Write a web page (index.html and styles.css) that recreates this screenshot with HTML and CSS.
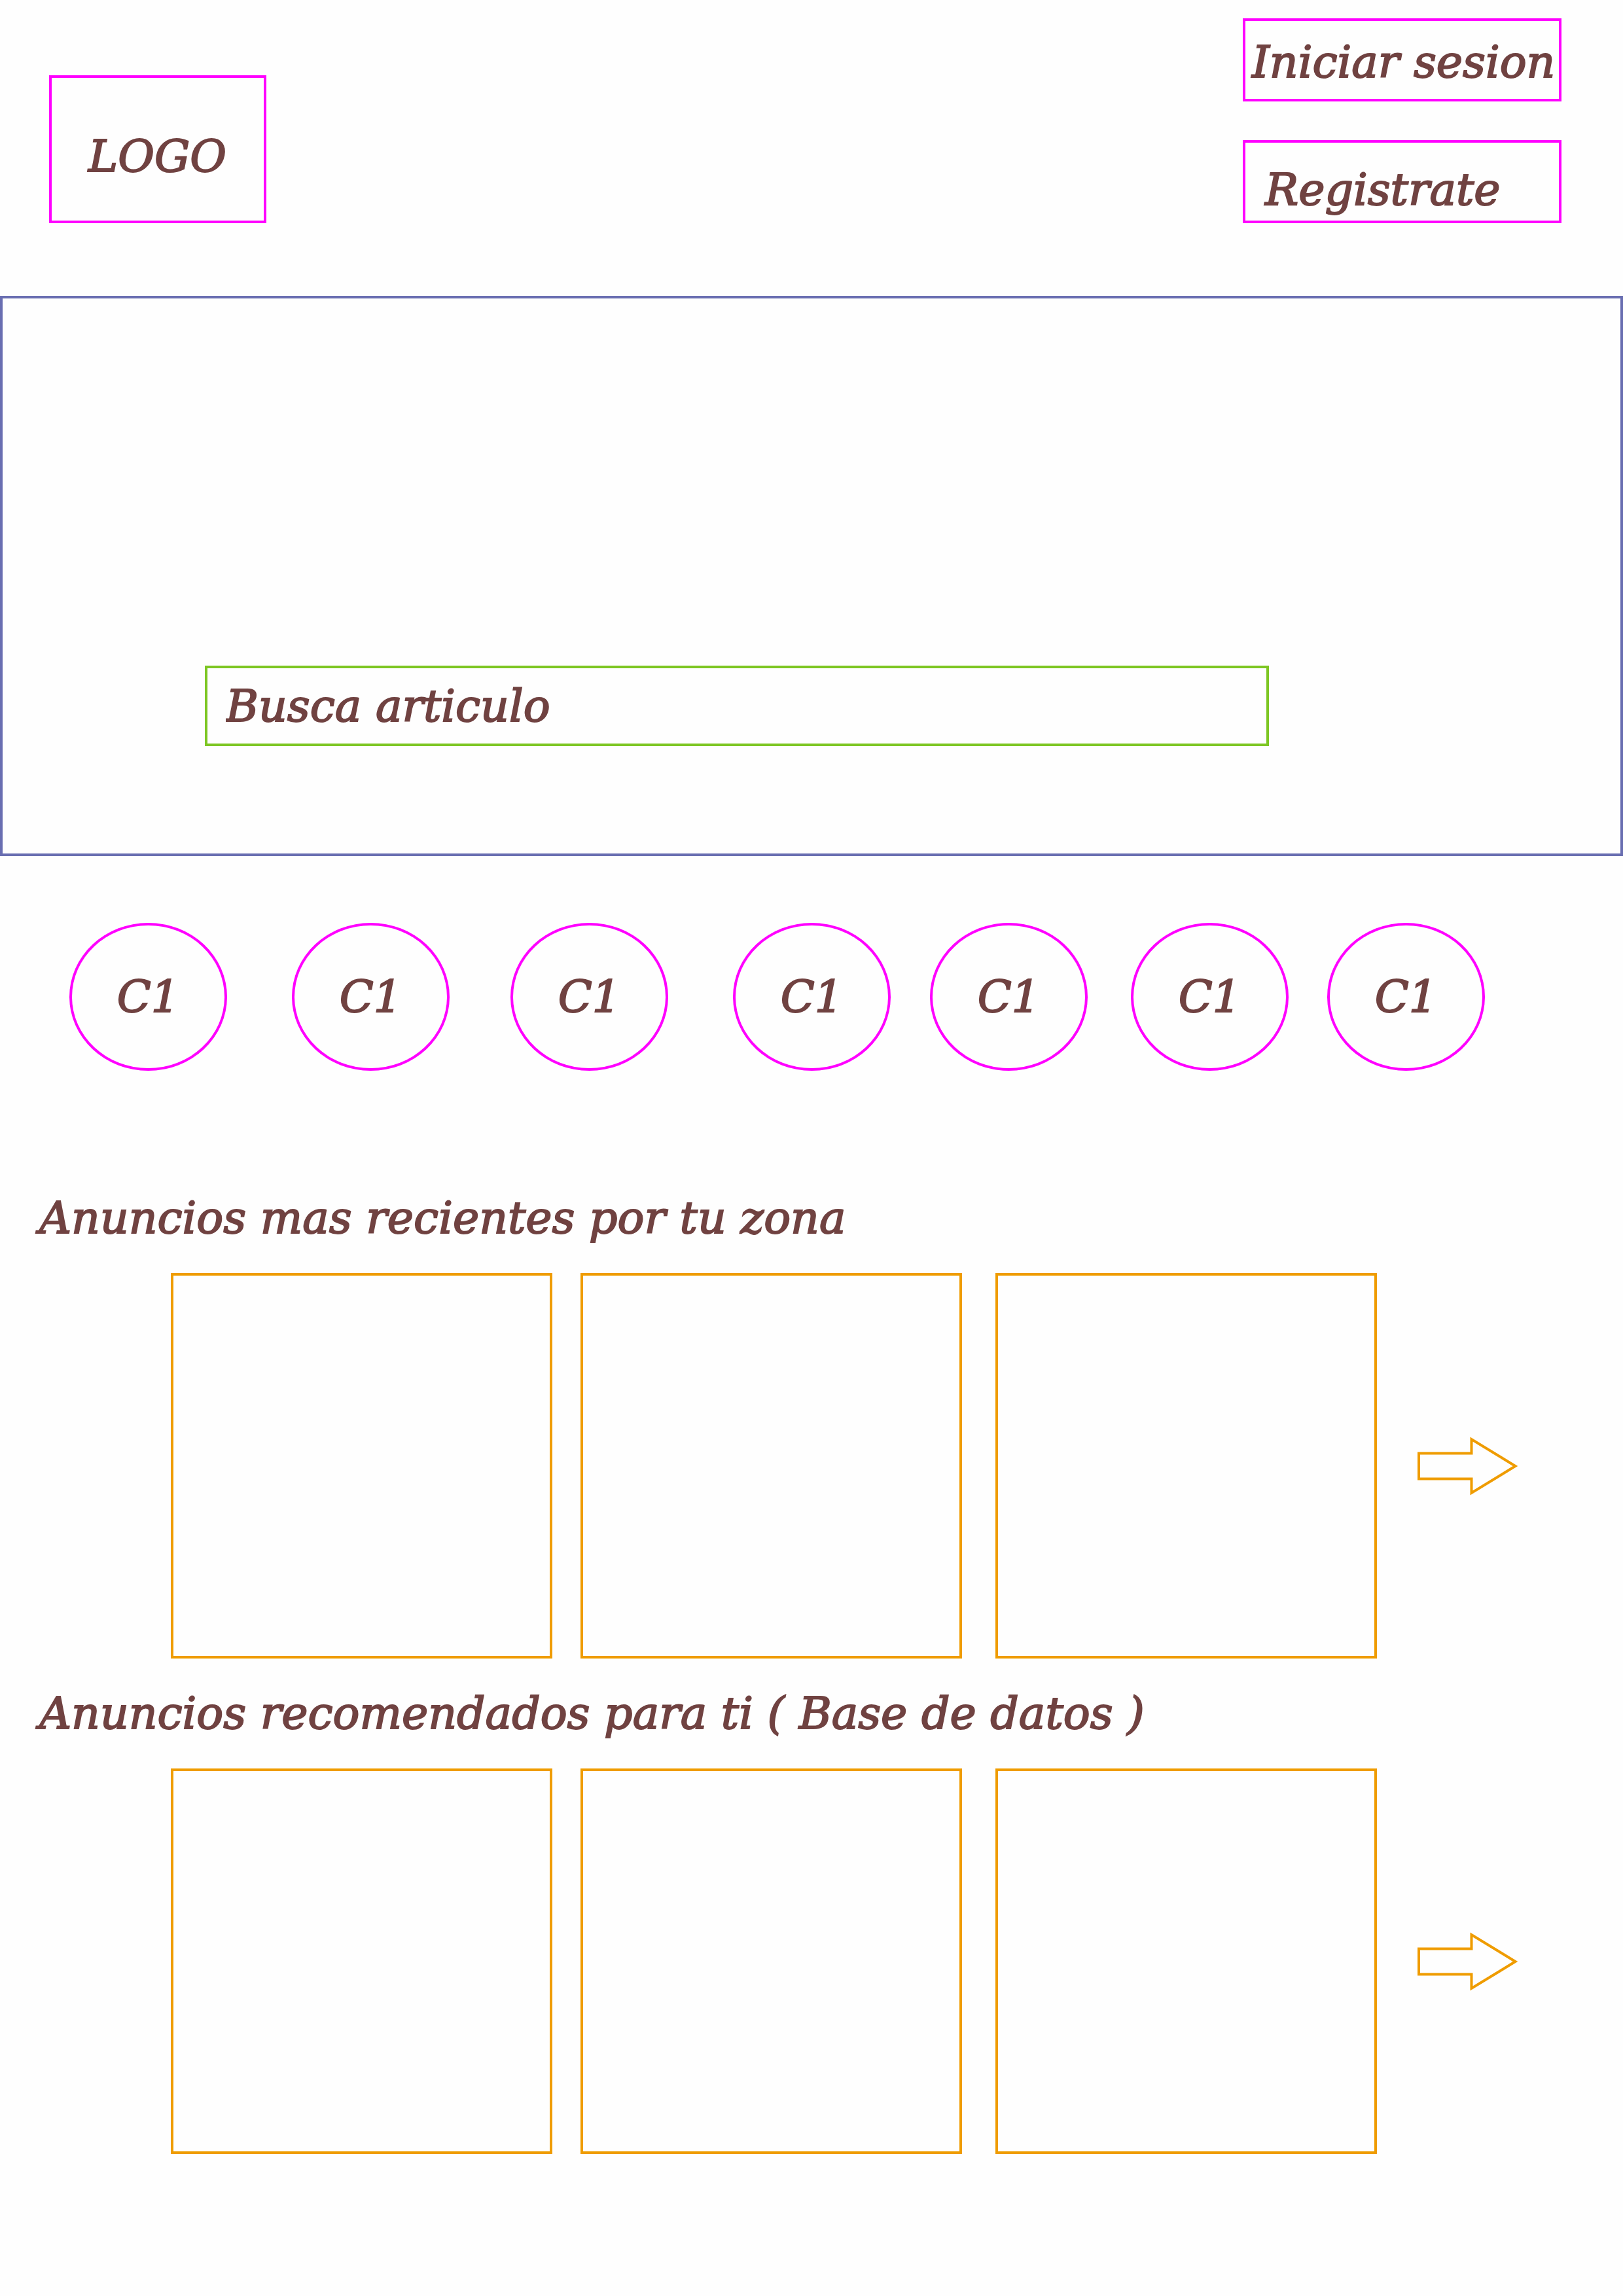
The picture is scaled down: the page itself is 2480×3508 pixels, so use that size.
FILE: index.html
```html
<!DOCTYPE html>
<html lang="es">
<head>
  <meta charset="utf-8">
  <meta name="viewport" content="width=device-width, initial-scale=1">
  <title>Anuncios</title>
  <link rel="stylesheet" href="styles.css">
</head>
<body>
  <header class="header">
    <a class="logo" href="#">LOGO</a>
    <nav class="account">
      <button class="account-button" type="button">Iniciar sesion</button>
      <button class="account-button account-button--register" type="button">Registrate</button>
    </nav>
  </header>

  <main>
    <form class="hero" role="search">
      <input class="search" type="search" aria-label="Busca articulo" placeholder="Busca articulo">
    </form>

    <nav class="categories" aria-label="Categorias">
      <a class="category" href="#">C1</a>
      <a class="category" href="#">C1</a>
      <a class="category" href="#">C1</a>
      <a class="category" href="#">C1</a>
      <a class="category" href="#">C1</a>
      <a class="category" href="#">C1</a>
      <a class="category" href="#">C1</a>
    </nav>

    <section class="listing">
      <h2 class="listing-title">Anuncios mas recientes por tu zona</h2>
      <div class="cards">
        <article class="card"></article>
        <article class="card"></article>
        <article class="card"></article>
        <button class="next" type="button" aria-label="Siguiente">
          <svg class="arrow" viewBox="0 0 154 90" aria-hidden="true"><path d="M2 25.500H82.500V4L149.500 45L82.500 86V64.500H2Z"/></svg>
        </button>
      </div>
    </section>

    <section class="listing">
      <h2 class="listing-title">Anuncios recomendados para ti ( Base de datos )</h2>
      <div class="cards">
        <article class="card"></article>
        <article class="card"></article>
        <article class="card"></article>
        <button class="next" type="button" aria-label="Siguiente">
          <svg class="arrow" viewBox="0 0 154 90" aria-hidden="true"><path d="M2 25.500H82.500V4L149.500 45L82.500 86V64.500H2Z"/></svg>
        </button>
      </div>
    </section>
  </main>
</body>
</html>
```
FILE: styles.css
```css
:root {
  --ink: #704241;
  --pink: #ff00ff;
  --blue: #696eb1;
  --green: #7dc623;
  --orange: #ef9c00;
  --line: 4px;
}

* {
  box-sizing: border-box;
}

body {
  margin: 0;
  background: #fefefe;
  color: var(--ink);
  font: italic 68px/76px "DejaVu Serif", serif;
  -webkit-text-stroke: 2px var(--ink);
}

a {
  color: inherit;
  text-decoration: none;
}

button,
input {
  margin: 0;
  padding: 0;
  border: 0;
  border-radius: 0;
  background: none;
  color: inherit;
  font: inherit;
  -webkit-text-stroke: inherit;
}

/* Header */
.header {
  display: flex;
  justify-content: space-between;
  align-items: flex-end;
  padding: 28px 94px 111px 75px;
}

.logo {
  width: 332px;
  padding: 82px 0 60px 56px;
  border: var(--line) solid var(--pink);
}

.account {
  display: flex;
  flex-direction: column;
  gap: 59px;
  width: 487px;
}

.account-button {
  padding: 25px 0 18px 10px;
  border: var(--line) solid var(--pink);
  text-align: left;
  white-space: nowrap;
}

.account-button--register {
  padding: 34px 0 9px 30px;
}

/* Search banner */
.hero {
  padding: 561px 537px 164px 309px;
  border: var(--line) solid var(--blue);
}

.search {
  display: block;
  width: 100%;
  height: 123px;
  padding: 0 28px;
  border: var(--line) solid var(--green);
  appearance: none;
  outline: none;
}

.search::placeholder {
  color: var(--ink);
  opacity: 1;
}

/* Categories */
.categories {
  display: grid;
  grid-template-columns: 340fr 334fr 340fr 301fr 307fr 300fr 452fr;
  padding: 102px 0 0 106px;
}

.category {
  display: flex;
  justify-content: center;
  align-items: center;
  width: 241px;
  height: 226px;
  border: var(--line) solid var(--pink);
  border-radius: 50%;
}

/* Listings */
.listing {
  padding-top: 46px;
}

.categories + .listing {
  padding-top: 187px;
}

.listing-title {
  margin: 0;
  padding: 0 60px;
  font-size: inherit;
  font-weight: inherit;
}

.cards {
  display: grid;
  grid-template-columns: 583fr 43fr 583fr 51fr 583fr 62fr 154px 160fr;
  align-items: center;
  padding: 46px 0 0 261px;
}

.card {
  aspect-ratio: 583 / 589;
  border: var(--line) solid var(--orange);
}

.card:nth-child(2) {
  grid-column: 3;
}

.card:nth-child(3) {
  grid-column: 5;
}

.next {
  grid-column: 7;
}

.arrow {
  display: block;
  width: 100%;
  fill: none;
  stroke: var(--orange);
  stroke-width: 4;
}
```
